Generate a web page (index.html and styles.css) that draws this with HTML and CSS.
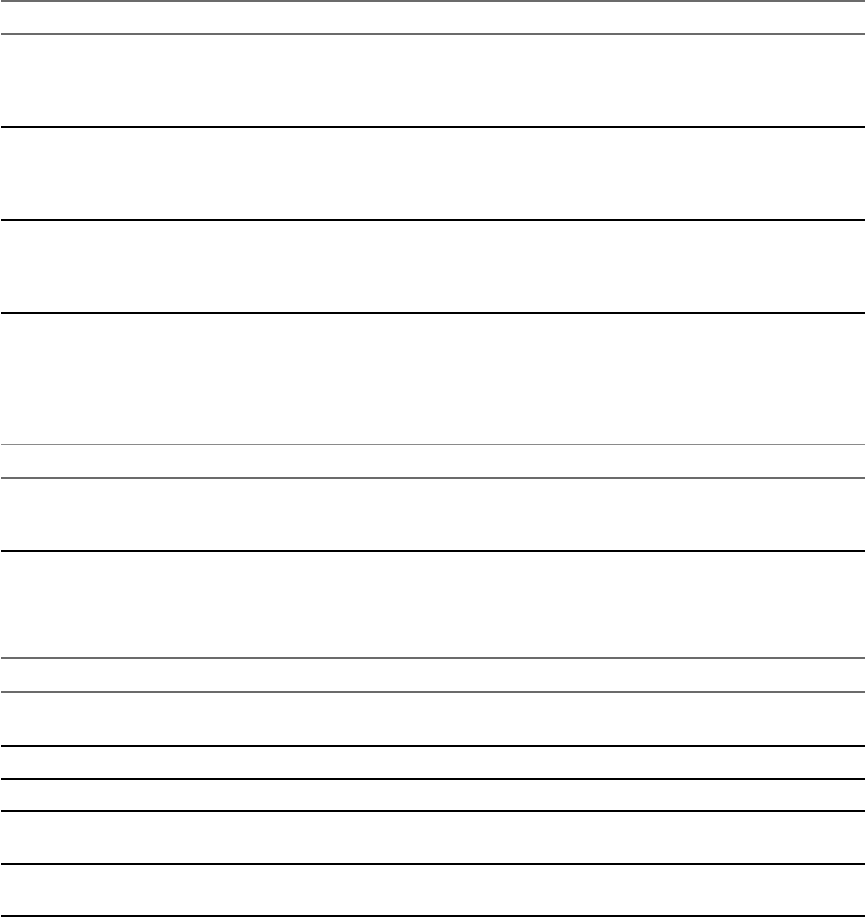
FILE: index.html
```html
<!DOCTYPE html>
<html>
<head>
<meta charset="utf-8">
<link rel="stylesheet" href="styles.css">
</head>
<body>
<div class="table">
  <div class="row gray h31"></div>
  <div class="row gray h91"></div>
  <div class="row dark h91"></div>
  <div class="row dark h91"></div>
  <div class="row dark h130"></div>
  <div class="row light h32"></div>
  <div class="row gray h71"></div>
  <div class="row dark h105"></div>
  <div class="row gray h32"></div>
  <div class="row gray h52"></div>
  <div class="row dark h31"></div>
  <div class="row dark h30"></div>
  <div class="row dark h51"></div>
  <div class="row dark h50"></div>
  <div class="row dark h0"></div>
</div>
</body>
</html>
```

FILE: styles.css
```css
html, body {
  margin: 0;
  padding: 0;
  background: #fff;
  font-family: "Liberation Sans", Arial, sans-serif;
}
.table {
  display: flex;
  flex-direction: column;
  padding-left: 1px;
}
.row {
  border-top: 2px solid #000;
}
.row.gray { border-top-color: #6b6b6b; }
.row.dark { border-top-color: #000; }
.row.light { border-top: 1px solid #8a8a8a; }
.h0 { height: 0; }
.h30 { height: 30px; }
.h31 { height: 31px; }
.h32 { height: 32px; }
.h50 { height: 50px; }
.h51 { height: 51px; }
.h52 { height: 52px; }
.h71 { height: 71px; }
.h91 { height: 91px; }
.h105 { height: 105px; }
.h130 { height: 130px; }
```
